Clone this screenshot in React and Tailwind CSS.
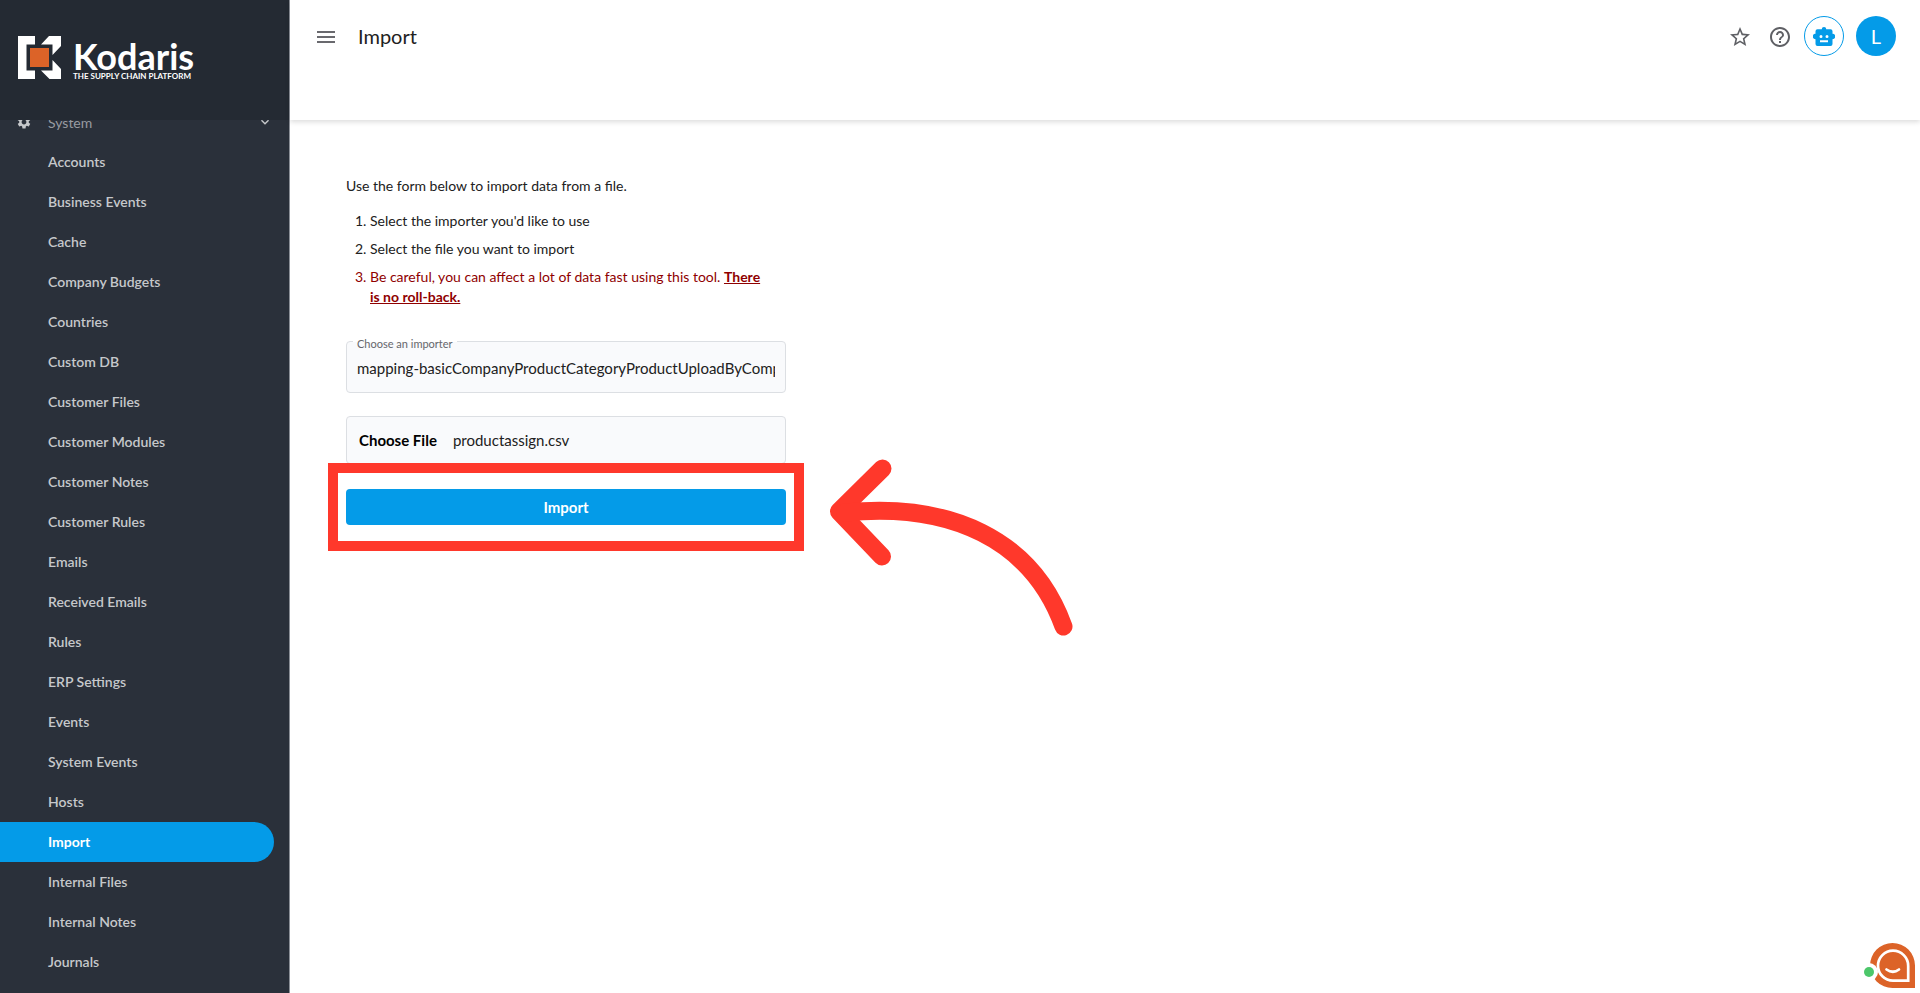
import { MdStarBorder, MdHelpOutline, MdSettings, MdKeyboardArrowDown } from "react-icons/md";

const items = [
  "Accounts", "Business Events", "Cache", "Company Budgets", "Countries", "Custom DB",
  "Customer Files", "Customer Modules", "Customer Notes", "Customer Rules", "Emails",
  "Received Emails", "Rules", "ERP Settings", "Events", "System Events", "Hosts",
  "Import", "Internal Files", "Internal Notes", "Journals",
];

function Logo() {
  return (
    <a href="#home" className="flex gap-3 px-[18px] pt-9 text-white">
      <svg viewBox="0 0 43 43" className="size-[43px] shrink-0" aria-hidden="true">
        <path fill="#fff" d="M0 0h17v8.500h-8.500v26h8.500V43H0zM31 0h12v10l-8.500 9V8.500H23zM23 34.500h11.500V24l8.500 9v10H31.500z" />
        <path fill="#dc6328" d="M12 12h19v19H12z" />
      </svg>
      <span className="flex flex-col pt-1">
        <span className="text-[36px] leading-8 font-bold">Kodaris</span>
        <span className="text-[8px] leading-2 font-bold whitespace-nowrap">THE SUPPLY CHAIN PLATFORM</span>
      </span>
    </a>
  );
}

function Sidebar() {
  return (
    <aside className="flex w-[290px] shrink-0 flex-col border-r border-[#8b8f97] bg-[#2a303a]">
      <div className="h-[120px] shrink-0 bg-[#242a33]">
        <Logo />
      </div>
      <nav className="min-h-0 flex-1 overflow-hidden">
        <ul className="-mt-[18px] text-[14px] font-semibold text-[#c6c8cb]">
          <li>
            <button type="button" className="flex h-10 w-full items-center px-4 font-normal text-[#989ba1]">
              <MdSettings className="size-4 text-[#c6c8cb]" />
              <span className="ml-4 flex-1 text-left">System</span>
              <MdKeyboardArrowDown className="size-4 text-[#c6c8cb]" />
            </button>
          </li>
          {items.map((name) => (
            <li key={name}>
              <a
                href="#section"
                className={
                  name === "Import"
                    ? "mr-[15px] flex h-10 items-center rounded-r-full bg-[#049be8] pb-px pl-12 font-bold text-white"
                    : "mr-[15px] flex h-10 items-center pb-px pl-12"
                }
              >
                {name}
              </a>
            </li>
          ))}
        </ul>
      </nav>
    </aside>
  );
}

function Header() {
  return (
    <header className="h-[120px] shrink-0 bg-white px-6 pt-4 shadow-[0_2px_5px_rgba(0,0,0,0.14)]">
      <div className="flex h-10 items-center">
        <button type="button" aria-label="Toggle menu" className="ml-[3px] pt-0.5">
          <svg viewBox="0 0 18 14" className="h-3.5 w-[18px]" aria-hidden="true">
            <path d="M0 2h18M0 7h18M0 12h18" stroke="#69696e" strokeWidth="2" />
          </svg>
        </button>
        <h1 className="ml-[23px] flex-1 text-[20px] text-[#212121]">Import</h1>
        <div className="flex items-center text-[#5f6065]">
          <button type="button" aria-label="Favorites" className="mr-4 pt-0.5"><MdStarBorder className="size-6" /></button>
          <button type="button" aria-label="Help" className="mr-3 pt-0.5"><MdHelpOutline className="size-6" /></button>
          <button type="button" aria-label="Assistant" className="mr-3 flex size-10 items-center justify-center rounded-full border border-[#049be8]">
            <svg viewBox="0 0 22 19" className="h-[19px] w-[22px]" aria-hidden="true">
              <path fill="#049be8" fillRule="evenodd" d="M11 0a2.200 2.200 0 0 1 2.200 2.300H17.500a2 2 0 0 1 2 2V6.800a2.700 2.700 0 0 1 0 5.400V17a2 2 0 0 1-2 2h-13a2 2 0 0 1-2-2v-4.800a2.700 2.700 0 0 1 0-5.400V4.300a2 2 0 0 1 2-2h4.300A2.200 2.200 0 0 1 11 0zM8 8a1.500 1.500 0 1 0 0 3 1.500 1.500 0 0 0 0-3zm6 0a1.500 1.500 0 1 0 0 3 1.500 1.500 0 0 0 0-3zM7 13.300v2h8v-2z" />
            </svg>
          </button>
          <button type="button" aria-label="Account" className="size-10 rounded-full bg-[#049be8] text-[20px] text-white">L</button>
        </div>
      </div>
    </header>
  );
}

function ImportForm() {
  return (
    <form className="w-[440px]" onSubmit={(e) => e.preventDefault()}>
      <p className="leading-5">Use the form below to import data from a file.</p>
      <ol className="mt-[15px] flex list-decimal flex-col gap-2 pl-6 leading-5">
        <li>Select the importer you'd like to use</li>
        <li>Select the file you want to import</li>
        <li className="pr-4 text-[#8f0000]">
          Be careful, you can affect a lot of data fast using this tool. <strong className="font-bold underline">There is no roll-back.</strong>
        </li>
      </ol>
      <div className="relative mt-[34px] rounded border border-[#dcdfe3] bg-[#f9fafc] px-2.5">
        <label htmlFor="importer" className="absolute -top-1.5 left-1.5 bg-linear-to-b from-white from-40% to-[#f9fafc] to-40% px-1 text-[11px] leading-4 text-[#66676b]">
          Choose an importer
        </label>
        <input
          id="importer"
          type="text"
          defaultValue="mapping-basicCompanyProductCategoryProductUploadByComp"
          className="block h-[50px] w-full bg-transparent pt-0.5 text-[15px] outline-none"
        />
      </div>
      <label htmlFor="file" className="mt-[23px] flex h-12 items-center gap-4 rounded border border-[#dcdfe3] bg-[#f9fafc] px-3 text-[15px]">
        <span className="font-bold text-black">Choose File</span>
        <span>productassign.csv</span>
        <input id="file" type="file" className="sr-only" />
      </label>
      <div className="relative mt-[25px]">
        <button type="submit" className="block h-9 w-full rounded bg-[#049be8] text-[15px] font-bold text-white">Import</button>
        <div className="pointer-events-none absolute -inset-x-[18px] -inset-y-[26px] border-10 border-[#ff382b]" />
        <svg viewBox="0 0 244 178" className="pointer-events-none absolute -top-[31px] left-[484px] h-[178px] w-[244px]" aria-hidden="true">
          <g fill="none" stroke="#ff382b" strokeWidth="18" strokeLinecap="round" strokeLinejoin="round">
            <path d="M52.500 10.500 9 53.500 52 98.500" />
            <path d="M15 54.500C120 44 202 81 233.500 168.500" />
          </g>
        </svg>
      </div>
    </form>
  );
}

function ChatBubble() {
  return (
    <button type="button" aria-label="Open chat" className="fixed right-0 bottom-0">
      <svg viewBox="0 0 60 53" className="block h-[53px] w-[60px]" aria-hidden="true">
        <path fill="#dc6328" d="M32.500 3A22.500 22.500 0 0 1 55 25.500V48H32.500a22.500 22.500 0 0 1 0-45z" />
        <path fill="none" stroke="#fff" strokeWidth="2.700" d="M33 10.700a15.200 15.200 0 0 1 15.200 15.200V40.700H33a15 15 0 0 1 0-30z" />
        <path fill="none" stroke="#fff" strokeWidth="2.700" strokeLinecap="round" d="M26.500 29.500q6.500 4.500 12.500 0" />
        <circle cx="9" cy="32" r="9" fill="#fff" />
        <circle cx="9" cy="32" r="5" fill="#4cc76a" />
      </svg>
    </button>
  );
}

export default function App() {
  return (
    <div className="flex h-screen overflow-hidden bg-white font-['Lato','Noto_Sans',sans-serif] text-[14px] text-[#212121]">
      <Sidebar />
      <div className="flex min-w-0 flex-1 flex-col">
        <Header />
        <main className="flex-1 px-14 pt-14">
          <ImportForm />
        </main>
      </div>
      <ChatBubble />
    </div>
  );
}
